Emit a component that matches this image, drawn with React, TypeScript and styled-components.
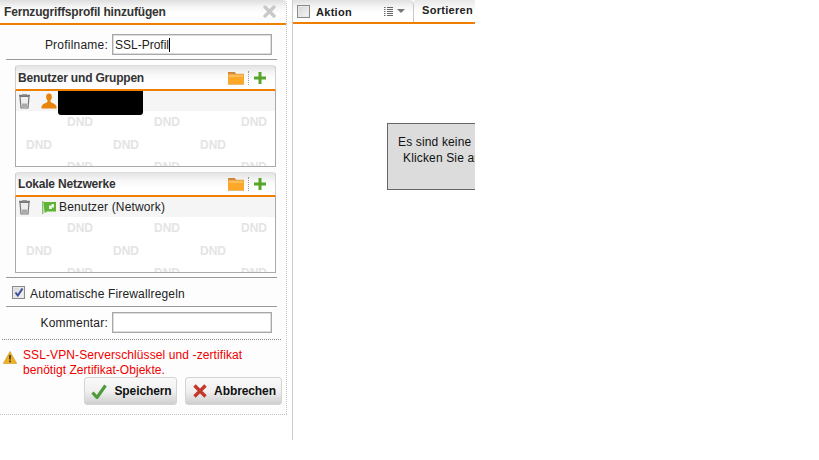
import styled, { createGlobalStyle } from "styled-components"

const GlobalStyle = createGlobalStyle`
  html, body {
    margin: 0;
    padding: 0;
    background: #fff;
  }
  body {
    font-family: "Liberation Sans", Arial, sans-serif;
    font-size: 12px;
    letter-spacing: 0.15px;
    color: #222;
  }
`

const ORANGE = "#ee7f00"

const Page = styled.div`
  display: flex;
  width: 819px;
  height: 460px;
  overflow: hidden;
`

const LeftColumn = styled.div`
  box-sizing: border-box;
  width: 293px;
  height: 440px;
  border-right: 1px solid #ccc;
`

const Panel = styled.div`
  box-sizing: border-box;
  width: 287px;
  height: 415px;
  background: #fdfdfd;
  border-right: 1px dotted #c4c4c4;
  border-bottom: 1px dotted #c4c4c4;
  border-top-right-radius: 4px;
`

const TitleBar = styled.div`
  box-sizing: border-box;
  height: 25px;
  display: flex;
  align-items: center;
  justify-content: space-between;
  padding: 0 10px 0 4px;
  background: linear-gradient(#dedede 0, #f6f6f6 7px, #fff 14px, #fbfbfb 100%);
  border-bottom: 2px solid ${ORANGE};
  border-top-right-radius: 4px;
`

const Title = styled.span`
  font-weight: bold;
  font-size: 12px;
  letter-spacing: -0.17px;
  color: #333;
`

const FormRow = styled.div<{ $top: number }>`
  display: flex;
  align-items: center;
  justify-content: flex-end;
  gap: 4px;
  padding: ${(p) => p.$top}px 14px 0 0;
`

const Label = styled.label`
  letter-spacing: 0.22px;
  color: #222;
`

const TextBox = styled.div`
  box-sizing: border-box;
  width: 160px;
  height: 21px;
  display: flex;
  align-items: center;
  padding-left: 2px;
  background: #fff;
  border: 1px solid #a8a8a8;
  box-shadow: inset 0 0 0 0.5px #bbb;
  font-size: 12px;
  letter-spacing: 0;
  color: #222;
`

const Caret = styled.span`
  display: inline-block;
  width: 1px;
  height: 14px;
  background: #000;
`

const Separator = styled.hr<{ $top: number }>`
  margin: ${(p) => p.$top}px 9px 0 6px;
  border: 0;
  height: 1px;
  background: #999;
`

const ListBox = styled.section<{ $top: number; $height: number }>`
  box-sizing: border-box;
  margin: ${(p) => p.$top}px 10px 0 15px;
  width: 261px;
  height: ${(p) => p.$height}px;
  display: flex;
  flex-direction: column;
  border: 1px solid #aaa;
  border-top-color: #ddd;
  border-radius: 4px 4px 0 0;
  background: #fff;
`

const ListHeader = styled.header<{ $height: number }>`
  box-sizing: border-box;
  flex: none;
  height: ${(p) => p.$height}px;
  display: flex;
  align-items: center;
  margin: 0 -1px;
  padding: 0 9px 0 2px;
  background: linear-gradient(#e4e4e4 0, #f7f7f7 8px, #fff 15px);
  border-left: 1px solid #d0d0d0;
  border-right: 1px solid #d0d0d0;
  border-bottom: 2px solid ${ORANGE};
  border-radius: 3px 3px 0 0;
`

const ListTitle = styled.span`
  flex: 1;
  font-weight: bold;
  letter-spacing: -0.2px;
  color: #333;
`

const HeaderTools = styled.div`
  display: flex;
  align-items: center;
`

const ToolDots = styled.span`
  display: block;
  width: 0;
  height: 14px;
  margin: 0 5px 0 4px;
  border-left: 1px dotted #999;
`

const ListBody = styled.div`
  position: relative;
  flex: 1;
  overflow: hidden;
`

const Watermark = styled.div`
  position: absolute;
  inset: 0;
  padding-top: 25px;
  font-weight: bold;
  font-size: 12px;
  letter-spacing: 0;
  color: #e4e4e4;
`

const WatermarkRow = styled.div<{ $offset: number }>`
  height: 22.5px;
  line-height: 12px;
  display: flex;
  padding-left: ${(p) => p.$offset}px;
`

const WatermarkCell = styled.span`
  flex: none;
  width: 87px;
`

const ListItem = styled.div`
  position: relative;
  box-sizing: border-box;
  height: 20px;
  display: flex;
  align-items: flex-start;
  padding: 2px 0 0 2px;
  background: #f5f5f5;
  color: #222;
`

const ItemLabel = styled.span`
  line-height: 17px;
  font-size: 12px;
`

const Redaction = styled.div`
  flex: none;
  width: 85px;
  height: 24px;
  margin: -2px 0 0 1px;
  background: #000;
  border-radius: 0 0 3px 3px;
`

const TrashIcon = styled.svg`
  flex: none;
  margin-right: 10px;
`

const CheckRow = styled.div`
  display: flex;
  align-items: flex-start;
  gap: 5px;
  padding: 8px 0 0 12px;
  height: 15px;
`

const CheckText = styled.span`
  padding-top: 1px;
  line-height: 14px;
`

const FakeCheck = styled.span<{ $size: number }>`
  box-sizing: border-box;
  flex: none;
  display: block;
  width: ${(p) => p.$size}px;
  height: ${(p) => p.$size}px;
  border: 1px solid #8a8a8a;
  background: linear-gradient(135deg, #d4d4d4, #f6f6f6);
  box-shadow: inset 0 0 0 1px #e8e8e8;
`

const DottedLine = styled.div`
  margin: 6px 5px 0 2px;
  border-top: 1px dotted #888;
`

const Warning = styled.div`
  display: flex;
  align-items: flex-start;
  gap: 6px;
  padding: 8px 0 0 3px;
`

const WarningText = styled.div`
  color: #f00000;
  line-height: 15px;
`

const WarningLine = styled.div<{ $spacing: number }>`
  letter-spacing: ${(p) => p.$spacing}px;
`

const ButtonRow = styled.div`
  display: flex;
  justify-content: flex-end;
  gap: 8px;
  margin-top: -1px;
  padding-right: 4px;
`

const ActionButton = styled.button<{ $width: number }>`
  box-sizing: border-box;
  width: ${(p) => p.$width}px;
  height: 28px;
  padding: 0 0 0 2px;
  display: flex;
  align-items: center;
  justify-content: center;
  gap: 7px;
  background: linear-gradient(#fafafa 0, #f0f0f0 50%, #cfcfcf 100%);
  border: 1px solid #d4d4d4;
  border-radius: 3px;
  font-family: inherit;
  font-size: 12px;
  font-weight: bold;
  letter-spacing: -0.1px;
  color: #111;
`

const RightColumn = styled.div`
  width: 182px;
  height: 440px;
  overflow: hidden;
`

const TabBar = styled.div`
  box-sizing: border-box;
  height: 24px;
  display: flex;
  border-bottom: 2px solid ${ORANGE};
`

const Tab = styled.div<{ $width: number }>`
  box-sizing: border-box;
  width: ${(p) => p.$width}px;
  flex: none;
  display: flex;
  align-items: center;
  padding: 0 0 0 4px;
  background: linear-gradient(#e0e0e0 0, #f6f6f6 7px, #fff 14px);
  border-right: 1px solid #c8c8c8;
  border-top-right-radius: 5px;
  font-weight: bold;
  font-size: 11px;
  letter-spacing: 0.3px;
  color: #222;
`

const TabLabel = styled.span`
  flex: 1;
  padding: 2px 0 0 6px;
`

const SortTab = styled.div`
  flex: 1;
  padding: 4px 0 0 8px;
  background: linear-gradient(#e8e8e8 0, #fff 12px);
  font-weight: bold;
  font-size: 11px;
  letter-spacing: 0.3px;
  white-space: nowrap;
  color: #222;
`

const MessageBox = styled.div`
  box-sizing: border-box;
  width: 300px;
  height: 67px;
  margin: 99px 0 0 94px;
  padding-top: 10px;
  background: #dcdcdc;
  border: 1px solid #666;
  line-height: 16px;
  white-space: nowrap;
  color: #111;
`

const MessageLine = styled.div<{ $indent: number }>`
  padding-left: ${(p) => p.$indent}px;
`

const Trash = () => (
  <TrashIcon width="13" height="16" viewBox="0 0 13 16">
    <path d="M1 2.500h11" stroke="#777" strokeWidth="1.400" />
    <path d="M4 1h5v1.500H4z" fill="#999" />
    <path d="M2 3.500 3 15h7l1-11.500z" fill="#eee" stroke="#777" strokeWidth="1.200" />
    <path d="M4 10.500h5V14H4z" fill="#aaa" />
  </TrashIcon>
)

const PersonIcon = () => (
  <svg width="16" height="16" viewBox="0 0 17 16" style={{ flex: "none" }}>
    <path
      d="M8.500 0C6.300 0 5.300 1.800 5.500 4c.1 1.500.7 2.600 1.400 3.400.2 1.300-.3 2-1.500 2.500C3 11 1 11.700.5 14.500V16h16v-1.500c-.5-2.800-2.500-3.500-4.900-4.600-1.200-.5-1.700-1.200-1.500-2.500.7-.8 1.300-1.900 1.400-3.400.2-2.200-.8-4-3-4z"
      fill="#e8830c"
    />
  </svg>
)

const NetworkIcon = () => (
  <svg width="14" height="13" viewBox="0 0 14 13" style={{ flex: "none", margin: "2px 3px 0 1px" }}>
    <path d="M0 0h1.500v13H0z" fill="#8cc56b" />
    <path d="M1.500 1H14v9.500H4.500v1H2.500z" fill="#5fb436" />
    <path d="M7 4.500h2.500V3H12v3.500h-2V8H7z" fill="#e9f6e1" />
  </svg>
)

const FolderIcon = () => (
  <svg width="16" height="14" viewBox="0 0 16 14">
    <path d="M0 1h7l1 2H0z" fill="#c7863a" />
    <path d="M0 3h16v10.500H0z" fill="#ffa726" stroke="#d9a766" strokeWidth=".6" />
    <path d="M1 4h14v2H1z" fill="#ffbe5c" />
  </svg>
)

const PlusIcon = () => (
  <svg width="12" height="12" viewBox="0 0 12 12">
    <path d="M4.500 0h3v4.500H12v3H7.500V12h-3V7.500H0v-3h4.500z" fill="#57a52a" />
  </svg>
)

const CloseIcon = () => (
  <svg width="13" height="13" viewBox="0 0 13 13">
    <path d="M2 2l9 9M11 2l-9 9" stroke="#c9c9c9" strokeWidth="3.400" strokeLinecap="round" />
  </svg>
)

const TickMark = () => (
  <svg width="11" height="11" viewBox="0 0 11 11" style={{ display: "block" }}>
    <path d="M2.500 5.500 4.800 8.500 9.500 1.500" fill="none" stroke="#3c4f9f" strokeWidth="2" />
  </svg>
)

const WarningIcon = () => (
  <svg width="14" height="13" viewBox="0 0 14 13" style={{ flex: "none", marginTop: 3 }}>
    <path d="M7 0.500 13.800 12.500H.2z" fill="#eeb021" stroke="#c98f1c" strokeWidth=".5" />
    <path d="M6.200 4h1.600v4.600H6.200zM6.200 9.600h1.600v1.600H6.200z" fill="#333" />
  </svg>
)

const SaveIcon = () => (
  <svg width="16" height="15" viewBox="0 0 16 15">
    <path d="M1.500 8.500 6 13.500 14.500 1.500" fill="none" stroke="#4f9a3a" strokeWidth="3.200" />
  </svg>
)

const CancelIcon = () => (
  <svg width="14" height="14" viewBox="0 0 14 14">
    <path d="M1.500 1.500l11 11M12.500 1.500l-11 11" stroke="#c2382a" strokeWidth="3.400" />
  </svg>
)

const ListIcon = () => (
  <svg width="9" height="9" viewBox="0 0 9 9" style={{ flex: "none", marginRight: 4 }}>
    <path d="M0 .5h1.500M3 .5h6M0 2.500h1.500M3 2.500h6M0 4.500h1.500M3 4.500h6M0 6.500h1.500M3 6.500h6M0 8.500h1.500M3 8.500h6" stroke="#666" />
  </svg>
)

const ArrowIcon = () => (
  <svg width="8" height="4" viewBox="0 0 8 4" style={{ flex: "none", marginRight: 8 }}>
    <path d="M0 0h8L4 4z" fill="#777" />
  </svg>
)

const WATERMARK_ROWS = [51, 10, 51]

function DndWatermark() {
  return (
    <Watermark>
      {WATERMARK_ROWS.map((offset, row) => (
        <WatermarkRow key={row} $offset={offset}>
          {[0, 1, 2].map((cell) => (
            <WatermarkCell key={cell}>DND</WatermarkCell>
          ))}
        </WatermarkRow>
      ))}
    </Watermark>
  )
}

function EntryList(props: {
  title: string
  top: number
  height: number
  headerHeight: number
  children: React.ReactNode
}) {
  return (
    <ListBox $top={props.top} $height={props.height}>
      <ListHeader $height={props.headerHeight}>
        <ListTitle>{props.title}</ListTitle>
        <HeaderTools>
          <FolderIcon />
          <ToolDots />
          <PlusIcon />
        </HeaderTools>
      </ListHeader>
      <ListBody>
        <DndWatermark />
        <ListItem>{props.children}</ListItem>
      </ListBody>
    </ListBox>
  )
}

export default function App() {
  return (
    <Page>
      <GlobalStyle />
      <LeftColumn>
        <Panel>
          <TitleBar>
            <Title>Fernzugriffsprofil hinzufügen</Title>
            <CloseIcon />
          </TitleBar>
          <FormRow $top={9}>
            <Label>Profilname:</Label>
            <TextBox>
              SSL-Profil
              <Caret />
            </TextBox>
          </FormRow>
          <Separator $top={4} />
          <EntryList title="Benutzer und Gruppen" top={5} height={102} headerHeight={25}>
            <Trash />
            <PersonIcon />
            <Redaction />
          </EntryList>
          <EntryList title="Lokale Netzwerke" top={5} height={101} headerHeight={24}>
            <Trash />
            <NetworkIcon />
            <ItemLabel>Benutzer (Network)</ItemLabel>
          </EntryList>
          <Separator $top={4} />
          <CheckRow>
            <FakeCheck $size={13}>
              <TickMark />
            </FakeCheck>
            <CheckText>Automatische Firewallregeln</CheckText>
          </CheckRow>
          <Separator $top={5} />
          <FormRow $top={5}>
            <Label>Kommentar:</Label>
            <TextBox />
          </FormRow>
          <DottedLine />
          <Warning>
            <WarningIcon />
            <WarningText>
              <WarningLine $spacing={0.1}>SSL-VPN-Serverschlüssel und -zertifikat</WarningLine>
              <WarningLine $spacing={0.04}>benötigt Zertifikat-Objekte.</WarningLine>
            </WarningText>
          </Warning>
          <ButtonRow>
            <ActionButton $width={93}>
              <SaveIcon />
              Speichern
            </ActionButton>
            <ActionButton $width={97}>
              <CancelIcon />
              Abbrechen
            </ActionButton>
          </ButtonRow>
        </Panel>
      </LeftColumn>
      <RightColumn>
        <TabBar>
          <Tab $width={121}>
            <FakeCheck $size={13} />
            <TabLabel>Aktion</TabLabel>
            <ListIcon />
            <ArrowIcon />
          </Tab>
          <SortTab>Sortieren</SortTab>
        </TabBar>
        <MessageBox>
          <MessageLine $indent={10}>Es sind keine Einträge vorhanden.</MessageLine>
          <MessageLine $indent={15}>Klicken Sie auf Hinzufügen.</MessageLine>
        </MessageBox>
      </RightColumn>
    </Page>
  )
}
